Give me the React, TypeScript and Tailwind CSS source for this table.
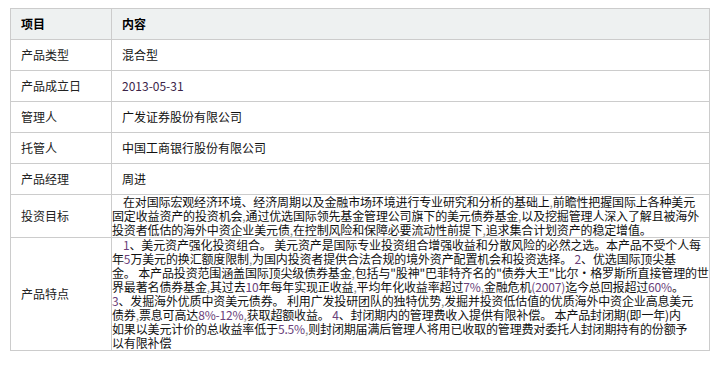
const font = { fontFamily: '"Noto Sans CJK SC", "Liberation Sans", sans-serif' };

function N({ children }: { children: React.ReactNode }) {
  return <span className="text-[#6a3f7a]">{children}</span>;
}

function C() {
  return <span className="text-[#888]">,</span>;
}

const simpleRows: [string, React.ReactNode][] = [
  ["产品类型", "混合型"],
  ["产品成立日", <span className="text-[#3b2448]">2013-05-31</span>],
  ["管理人", "广发证券股份有限公司"],
  ["托管人", "中国工商银行股份有限公司"],
  ["产品经理", "周进"],
];

export default function App() {
  return (
    <div className="min-h-screen bg-white pt-[8px] pl-[10px]" style={font}>
      <table className="w-[700px] table-fixed border-collapse text-[12px] text-[#111]">
        <colgroup>
          <col className="w-[101px]" />
          <col />
        </colgroup>
        <tbody>
          <tr className="h-[31px] bg-[#eef1f1]">
            <td className="border border-[#cccccc] px-[10px] font-bold text-black">项目</td>
            <td className="border border-[#cccccc] px-[10px] font-bold text-black">内容</td>
          </tr>
          {simpleRows.map(([label, value]) => (
            <tr key={label} className="h-[31px]">
              <td className="border border-[#cccccc] px-[10px] text-[#222]">{label}</td>
              <td className="border border-[#cccccc] px-[10px]">{value}</td>
            </tr>
          ))}
          <tr>
            <td className="border border-[#cccccc] px-[10px] text-[#222]">投资目标</td>
            <td className="border border-[#cccccc] p-0 leading-[14px] whitespace-nowrap tracking-[-0.15px]">
              <div className="pl-[11px]">在对国际宏观经济环境、经济周期以及金融市场环境进行专业研究和分析的基础上<C />前瞻性把握国际上各种美元</div>
              <div>固定收益资产的投资机会<C />通过优选国际领先基金管理公司旗下的美元债券基金<C />以及挖掘管理人深入了解且被海外</div>
              <div>投资者低估的海外中资企业美元债<C />在控制风险和保障必要流动性前提下<C />追求集合计划资产的稳定增值。</div>
            </td>
          </tr>
          <tr>
            <td className="border border-[#cccccc] px-[10px] text-[#222]">产品特点</td>
            <td className="border border-[#cccccc] p-0 leading-[14px] whitespace-nowrap tracking-[-0.15px]">
              <div className="pl-[11px]"><N>1</N>、美元资产强化投资组合。 美元资产是国际专业投资组合增强收益和分散风险的必然之选。本产品不受个人每</div>
              <div>年<N>5</N>万美元的换汇额度限制<C />为国内投资者提供合法合规的境外资产配置机会和投资选择。 <N>2</N>、优选国际顶尖基</div>
              <div>金。 本产品投资范围涵盖国际顶尖级债券基金<C />包括与"股神"巴菲特齐名的"债券大王"比尔·格罗斯所直接管理的世</div>
              <div>界最著名债券基金<C />其过去<N>10</N>年每年实现正收益<C />平均年化收益率超过<N>7%</N><C />金融危机<N>(2007)</N>迄今总回报超过<N>60%</N>。</div>
              <div><N>3</N>、发掘海外优质中资美元债券。 利用广发投研团队的独特优势<C />发掘并投资低估值的优质海外中资企业高息美元</div>
              <div>债券<C />票息可高达<N>8%-12%</N><C />获取超额收益。 <N>4</N>、封闭期内的管理费收入提供有限补偿。 本产品封闭期(即一年)内</div>
              <div>如果以美元计价的总收益率低于<N>5.5%</N><C />则封闭期届满后管理人将用已收取的管理费对委托人封闭期持有的份额予</div>
              <div>以有限补偿</div>
            </td>
          </tr>
        </tbody>
      </table>
    </div>
  );
}
